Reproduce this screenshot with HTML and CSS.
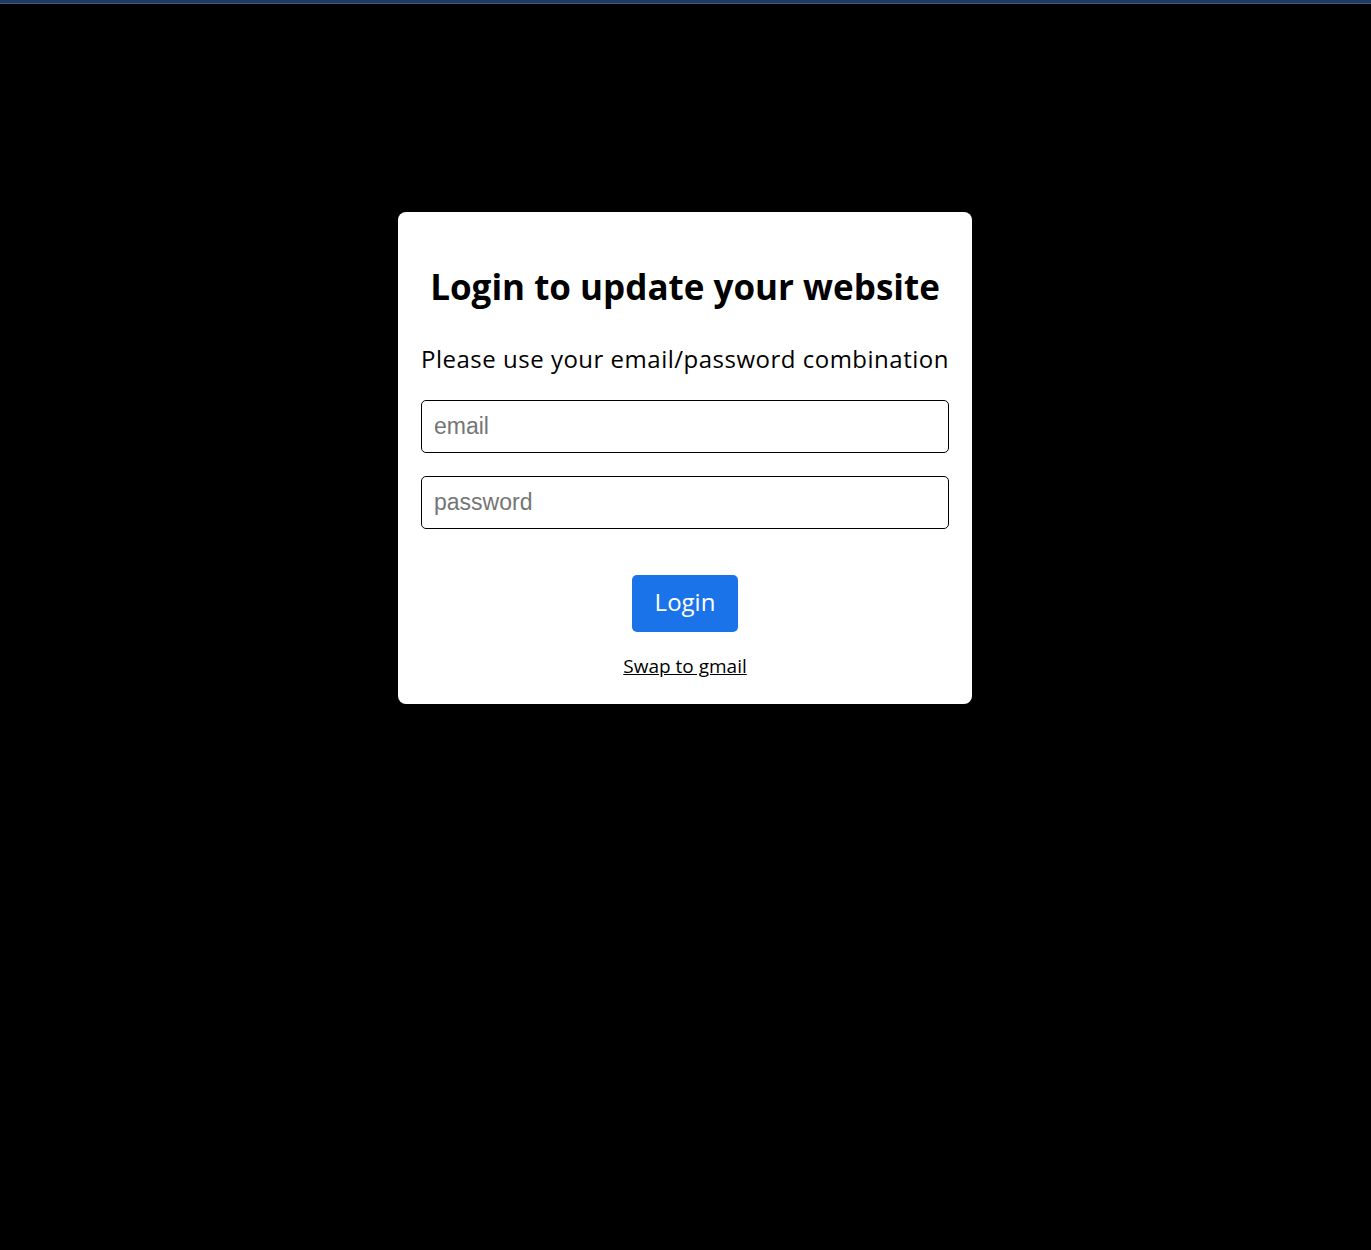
FILE: index.html
```html
<!DOCTYPE html>
<html lang="en">
<head>
<meta charset="utf-8">
<title>Login</title>
<link rel="stylesheet" href="styles.css">
</head>
<body>
<div class="topbar"></div>
<main class="page">
  <form class="card">
    <h1 class="title">Login to update your website</h1>
    <p class="subtitle">Please use your email/password combination</p>
    <input class="field" type="email" placeholder="email">
    <input class="field" type="password" placeholder="password">
    <button class="btn" type="button">Login</button>
    <a class="swap" href="#">Swap to gmail</a>
  </form>
</main>
</body>
</html>
```

FILE: styles.css
```css
* { box-sizing: border-box; }
html, body { margin: 0; padding: 0; }
body {
  background: #000;
  min-height: 1250px;
  font-family: "Open Sans", "Noto Sans", sans-serif;
}
.topbar {
  height: 4px;
  background: #1f3a5f;
  border-bottom: 1px solid #3d5b80;
}
.page {
  display: flex;
  justify-content: center;
  padding-top: 208px;
  padding-right: 1px;
}
.card {
  width: 574px;
  height: 492px;
  background: #fff;
  border-radius: 8px;
  padding: 0 23px;
  display: flex;
  flex-direction: column;
  align-items: center;
}
.title {
  margin: 52px 0 0;
  font-size: 35px;
  font-weight: 700;
  line-height: 46px;
  color: #000;
  white-space: nowrap;
}
.subtitle {
  margin: 36px 0 0;
  font-size: 24px;
  line-height: 26px;
  letter-spacing: 0.5px;
  color: #000;
  white-space: nowrap;
}
.field {
  width: 100%;
  height: 53px;
  border: 1px solid #000;
  border-radius: 5px;
  padding: 0 12px;
  font-family: "Liberation Sans", Arial, sans-serif;
  font-size: 23px;
  color: #000;
  background: #fff;
  outline: none;
}
.subtitle + .field { margin-top: 28px; }
.field + .field { margin-top: 23px; }
.field::placeholder { color: #757575; }
.btn {
  margin-top: 46px;
  width: 106px;
  height: 57px;
  padding: 0 0 5px;
  border: 0;
  border-radius: 5px;
  background: #1a73e8;
  color: #fff;
  font-family: "Open Sans", "Noto Sans", sans-serif;
  font-size: 24px;
  cursor: pointer;
}
.swap {
  margin-top: 22px;
  font-size: 19px;
  line-height: 24px;
  color: #000;
  text-decoration: underline;
}
```
